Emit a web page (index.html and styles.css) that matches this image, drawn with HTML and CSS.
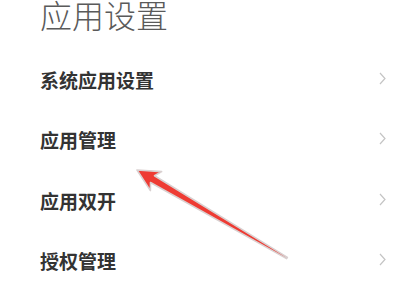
FILE: index.html
```html
<!DOCTYPE html>
<html lang="zh">
<head>
<meta charset="utf-8">
<link rel="stylesheet" href="styles.css">
</head>
<body>
<div class="page">
  <h1 class="title">应用设置</h1>
  <ul class="list">
    <li class="row"><span class="label">系统应用设置</span><span class="chev"><svg width="7" height="13" viewBox="0 0 7 13"><path d="M1 1 L6 6.5 L1 12" fill="none" stroke="#c4c4c4" stroke-width="1.2"/></svg></span></li>
    <li class="row"><span class="label">应用管理</span><span class="chev"><svg width="7" height="13" viewBox="0 0 7 13"><path d="M1 1 L6 6.5 L1 12" fill="none" stroke="#c4c4c4" stroke-width="1.2"/></svg></span></li>
    <li class="row"><span class="label">应用双开</span><span class="chev"><svg width="7" height="13" viewBox="0 0 7 13"><path d="M1 1 L6 6.5 L1 12" fill="none" stroke="#c4c4c4" stroke-width="1.2"/></svg></span></li>
    <li class="row"><span class="label">授权管理</span><span class="chev"><svg width="7" height="13" viewBox="0 0 7 13"><path d="M1 1 L6 6.5 L1 12" fill="none" stroke="#c4c4c4" stroke-width="1.2"/></svg></span></li>
  </ul>
  <svg class="arrow" width="400" height="300" viewBox="0 0 400 300">
    <polygon points="137,170 161.6,171.6 154.5,175.7 287.4,257.4 286.6,258.6 150.5,182.5 150.4,190.6" fill="#ee3b33" stroke="#d9d0d0" stroke-width="1.6" stroke-linejoin="round"/>
  </svg>
</div>
</body>
</html>
```
FILE: styles.css
```css
html, body {
  margin: 0;
  padding: 0;
  background: #ffffff;
}
.page {
  position: relative;
  width: 400px;
  height: 300px;
  overflow: hidden;
  font-family: "Noto Sans CJK SC", "Noto Sans", sans-serif;
}
.title {
  margin: 0 0 21px 0;
  padding-left: 40px;
  font-size: 32px;
  line-height: 28px;
  font-weight: 300;
  color: #5a5a5a;
}
.list {
  list-style: none;
  margin: 0;
  padding: 0;
}
.row {
  height: 60.5px;
  display: flex;
  align-items: center;
  justify-content: space-between;
  padding: 0 14px 0 40px;
}
.label {
  font-size: 19px;
  font-weight: 700;
  color: #333333;
}
.chev {
  display: flex;
  margin-top: -2px;
}
.arrow {
  position: absolute;
  left: 0;
  top: 0;
}
```
